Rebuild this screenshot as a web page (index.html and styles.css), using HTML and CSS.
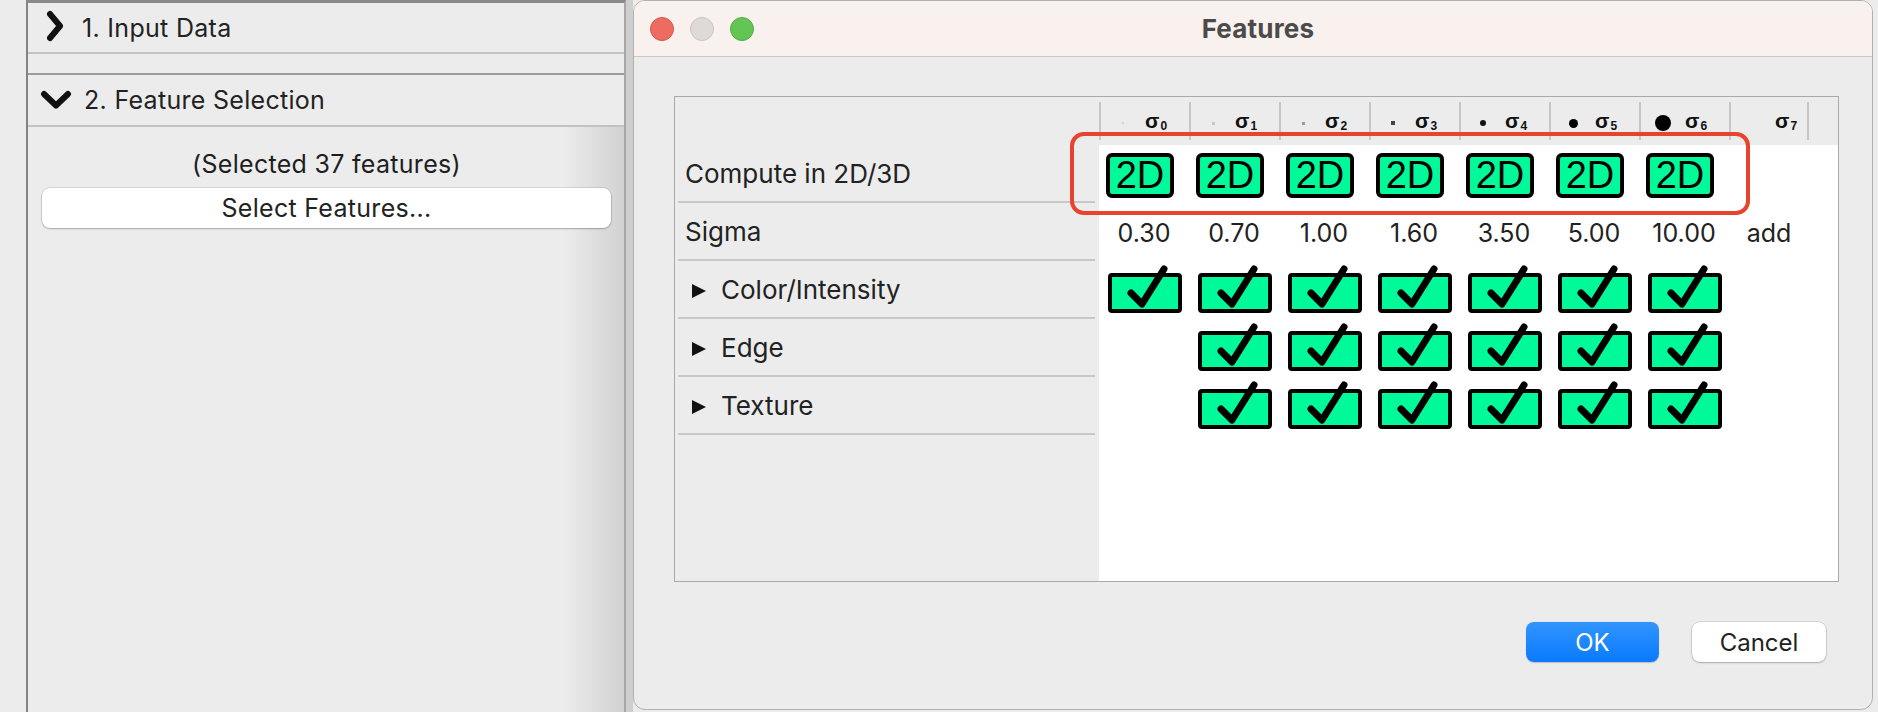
FILE: index.html
```html
<!DOCTYPE html>
<html>
<head>
<meta charset="utf-8">
<title>Features</title>
<link rel="stylesheet" href="styles.css">
</head>
<body>
<svg class="defs" width="0" height="0" aria-hidden="true">
  <defs>
    <symbol id="chk" viewBox="0 -10 74 50" overflow="visible">
      <rect x="2" y="2" width="70" height="36" rx="2" fill="#00fa9a" stroke="#000" stroke-width="4"/>
      <path d="M23 20 L34 31 L56 -4" fill="none" stroke="#000" stroke-width="7" stroke-linecap="round" stroke-linejoin="round"/>
    </symbol>
  </defs>
</svg>
<div class="screen">
  <div class="gutter"></div>
  <div class="panel">
    <div class="acc-head first">
      <svg class="chev-r" width="18" height="32" viewBox="0 0 18 32"><path d="M4 4 L14 16 L4 28" fill="none" stroke="#111" stroke-width="6" stroke-linecap="round" stroke-linejoin="round"/></svg>
      <span>1. Input Data</span>
    </div>
    <div class="acc-gap"></div>
    <div class="acc-head second">
      <svg class="chev-d" width="32" height="20" viewBox="0 0 32 20"><path d="M4 4 L16 15.5 L28 4" fill="none" stroke="#111" stroke-width="6" stroke-linecap="round" stroke-linejoin="round"/></svg>
      <span>2. Feature Selection</span>
    </div>
    <div class="acc-body">
      <div class="selected">(Selected 37 features)</div>
      <div class="select-btn">Select Features...</div>
    </div>
  </div>
  <div class="strip"></div>
  <div class="dialog">
    <div class="titlebar">
      <div class="lights">
        <span class="light red"></span>
        <span class="light gray"></span>
        <span class="light green"></span>
      </div>
      <div class="title">Features</div>
      <div></div>
    </div>
    <div class="dialog-body">
      <div class="table">
        <div class="labels">
          <div class="labels-head"></div>
          <div class="label-row">Compute in 2D/3D</div>
          <div class="label-row">Sigma</div>
          <div class="label-row"><span class="tri"></span>Color/Intensity</div>
          <div class="label-row"><span class="tri"></span>Edge</div>
          <div class="label-row"><span class="tri"></span>Texture</div>
        </div>
        <div class="grid">
          <div class="grid-head">
            <div class="colh"><div class="colh-in"><span class="dot-slot"><span class="dot d0"></span></span><span class="sig">σ<sub>0</sub></span></div></div>
            <div class="colh"><div class="colh-in"><span class="dot-slot"><span class="dot d1"></span></span><span class="sig">σ<sub>1</sub></span></div></div>
            <div class="colh"><div class="colh-in"><span class="dot-slot"><span class="dot d2"></span></span><span class="sig">σ<sub>2</sub></span></div></div>
            <div class="colh"><div class="colh-in"><span class="dot-slot"><span class="dot d3"></span></span><span class="sig">σ<sub>3</sub></span></div></div>
            <div class="colh"><div class="colh-in"><span class="dot-slot"><span class="dot d4"></span></span><span class="sig">σ<sub>4</sub></span></div></div>
            <div class="colh"><div class="colh-in"><span class="dot-slot"><span class="dot d5"></span></span><span class="sig">σ<sub>5</sub></span></div></div>
            <div class="colh"><div class="colh-in"><span class="dot-slot"><span class="dot d6"></span></span><span class="sig">σ<sub>6</sub></span></div></div>
            <div class="colh last"><div class="colh-in"><span class="dot-slot"></span><span class="sig">σ<sub>7</sub></span></div></div>
          </div>
          <div class="grid-body">
            <div class="grid-row">
              <div class="cell"><span class="b2d">2D</span></div>
              <div class="cell"><span class="b2d">2D</span></div>
              <div class="cell"><span class="b2d">2D</span></div>
              <div class="cell"><span class="b2d">2D</span></div>
              <div class="cell"><span class="b2d">2D</span></div>
              <div class="cell"><span class="b2d">2D</span></div>
              <div class="cell"><span class="b2d">2D</span></div>
            </div>
            <div class="grid-row values">
              <div class="cell">0.30</div>
              <div class="cell">0.70</div>
              <div class="cell">1.00</div>
              <div class="cell">1.60</div>
              <div class="cell">3.50</div>
              <div class="cell">5.00</div>
              <div class="cell">10.00</div>
              <div class="cell last">add</div>
            </div>
            <div class="grid-row">
              <div class="cell"><svg class="chk"><use href="#chk"/></svg></div>
              <div class="cell"><svg class="chk"><use href="#chk"/></svg></div>
              <div class="cell"><svg class="chk"><use href="#chk"/></svg></div>
              <div class="cell"><svg class="chk"><use href="#chk"/></svg></div>
              <div class="cell"><svg class="chk"><use href="#chk"/></svg></div>
              <div class="cell"><svg class="chk"><use href="#chk"/></svg></div>
              <div class="cell"><svg class="chk"><use href="#chk"/></svg></div>
            </div>
            <div class="grid-row">
              <div class="cell"></div>
              <div class="cell"><svg class="chk"><use href="#chk"/></svg></div>
              <div class="cell"><svg class="chk"><use href="#chk"/></svg></div>
              <div class="cell"><svg class="chk"><use href="#chk"/></svg></div>
              <div class="cell"><svg class="chk"><use href="#chk"/></svg></div>
              <div class="cell"><svg class="chk"><use href="#chk"/></svg></div>
              <div class="cell"><svg class="chk"><use href="#chk"/></svg></div>
            </div>
            <div class="grid-row">
              <div class="cell"></div>
              <div class="cell"><svg class="chk"><use href="#chk"/></svg></div>
              <div class="cell"><svg class="chk"><use href="#chk"/></svg></div>
              <div class="cell"><svg class="chk"><use href="#chk"/></svg></div>
              <div class="cell"><svg class="chk"><use href="#chk"/></svg></div>
              <div class="cell"><svg class="chk"><use href="#chk"/></svg></div>
              <div class="cell"><svg class="chk"><use href="#chk"/></svg></div>
            </div>
          </div>
        </div>
        <div class="highlight"></div>
      </div>
      <div class="buttons">
        <div class="btn ok">OK</div>
        <div class="btn cancel">Cancel</div>
      </div>
    </div>
  </div>
</div>
</body>
</html>
```

FILE: styles.css
```css
* { box-sizing: border-box; }
html, body { margin: 0; padding: 0; }
body {
  width: 1878px;
  height: 712px;
  overflow: hidden;
  background: #ececec;
  font-family: Inter, "Liberation Sans", sans-serif;
  color: #222;
}
.defs { position: absolute; width: 0; height: 0; }
.screen { display: flex; height: 712px; }
.gutter { width: 26px; flex: none; background: #ececec; }

/* left panel */
.panel {
  width: 600px;
  flex: none;
  display: flex;
  flex-direction: column;
  border-left: 2px solid #838383;
  border-right: 2px solid #a6a6a6;
  border-top: 3px solid #8a8a8a;
  background: #ececec;
}
.acc-head {
  display: flex;
  align-items: center;
  font-size: 25px;
  letter-spacing: 0.3px;
  color: #222;
  background: #ececec;
  border-bottom: 2px solid #c2c2c2;
}
.acc-head.first { height: 51px; padding-left: 18px; }
.acc-head.first span { margin-left: 18px; }
.acc-head.second { height: 52px; padding-left: 12px; }
.acc-head.second span { margin-left: 12px; }
.chev-r { margin-top: -3px; }
.acc-gap { height: 21px; border-bottom: 2px solid #9c9c9c; }
.acc-body {
  flex: 1;
  display: flex;
  flex-direction: column;
  align-items: stretch;
  padding: 22px 13px 0 14px;
  background: linear-gradient(to right, #ececec 0, #ececec 535px, #d2d2d2 596px);
}
.selected {
  text-align: center;
  font-size: 25px;
  letter-spacing: 0.3px;
  line-height: 30px;
  color: #1e1e1e;
}
.select-btn {
  margin-top: 9px;
  height: 40px;
  border-radius: 8px;
  background: #fff;
  box-shadow: 0 0 0 0.5px rgba(0,0,0,0.18), 0 1px 2px rgba(0,0,0,0.22);
  display: flex;
  align-items: center;
  justify-content: center;
  font-size: 25px;
  letter-spacing: 0.3px;
  color: #222;
}
.strip { width: 7px; flex: none; background: #cfcfcf; }

/* dialog */
.dialog {
  width: 1240px;
  height: 710px;
  flex: none;
  border: 1px solid #b0b0b0;
  border-radius: 12px;
  background: #ececec;
  overflow: hidden;
  display: flex;
  flex-direction: column;
}
.titlebar {
  height: 56px;
  flex: none;
  background: #f9f1ee;
  border-bottom: 1px solid #cdc8c6;
  display: grid;
  grid-template-columns: 1fr auto 1fr;
  align-items: center;
}
.lights { display: flex; gap: 16px; padding-left: 16px; }
.light {
  width: 24px;
  height: 24px;
  border-radius: 50%;
  display: block;
}
.light.red { background: #ee6b5f; border: 1px solid #d9564b; }
.light.gray { background: #dedad8; border: 1px solid #c9c4c2; }
.light.green { background: #62c554; border: 1px solid #53ad45; }
.title {
  font-size: 26px;
  font-weight: 700;
  letter-spacing: 0.2px;
  color: #4b4b4b;
  padding-left: 10px;
}
.dialog-body {
  flex: 1;
  padding: 39px 0 0 40px;
  display: flex;
  flex-direction: column;
}
.table {
  position: relative;
  width: 1165px;
  height: 486px;
  border: 1px solid #a9a9a9;
  display: flex;
}
.labels { width: 424px; flex: none; }
.labels-head { height: 48px; }
.label-row {
  height: 58px;
  margin: 0 4px 0 3px;
  padding-left: 7px;
  border-bottom: 2px solid #c8c8c8;
  display: flex;
  align-items: center;
  font-size: 26px;
  color: #222;
}
.tri {
  width: 0;
  height: 0;
  border-left: 14px solid #111;
  border-top: 7px solid transparent;
  border-bottom: 7px solid transparent;
  margin: 3px 15px 0 7px;
}
.grid { flex: 1; display: flex; flex-direction: column; }
.grid-head { height: 48px; flex: none; display: flex; }
.colh { width: 90px; flex: none; padding: 5px 0; }
.colh.last { width: 80px; }
.colh-in {
  height: 38px;
  border-left: 2px solid #c6c6c6;
  display: flex;
  align-items: center;
  padding-top: 4px;
}
.colh.last .colh-in { border-right: 2px solid #c6c6c6; }
.dot-slot {
  width: 44px;
  flex: none;
  display: flex;
  justify-content: center;
  align-items: center;
}
.dot { display: block; border-radius: 50%; }
.d0 { width: 2px; height: 2px; background: #d4d4d4; border-radius: 0; }
.d1 { width: 3px; height: 3px; background: #c6c6c6; border-radius: 0; }
.d2 { width: 3px; height: 3px; background: #9a9a9a; border-radius: 0; }
.d3 { width: 4px; height: 4px; background: #444; border-radius: 0; }
.d4 { width: 6px; height: 6px; background: #111; }
.d5 { width: 9px; height: 9px; background: #000; }
.d6 { width: 16px; height: 16px; background: #000; }
.sig {
  font-family: "Liberation Sans", Arial, sans-serif;
  font-weight: 700;
  font-size: 21px;
  line-height: 20px;
  color: #111;
}
.sig sub {
  font-size: 12px;
  vertical-align: -2px;
  margin-left: 1px;
}
.grid-body { flex: 1; background: #fff; }
.grid-row { height: 58px; display: flex; align-items: center; }
.cell {
  width: 90px;
  flex: none;
  display: flex;
  align-items: center;
}
.cell.last { width: 80px; }
.values .cell {
  justify-content: center;
  font-size: 25px;
  color: #222;
  padding-top: 2px;
}
.b2d {
  margin-left: 7px;
  width: 68px;
  height: 45px;
  border: 4px solid #000;
  border-radius: 6px;
  background: #00fa9a;
  font-family: "Liberation Sans", Arial, sans-serif;
  font-size: 38px;
  line-height: 36px;
  text-align: center;
  color: #000;
  margin-top: 2px;
}
.chk {
  width: 74px;
  height: 50px;
  margin-left: 9px;
  margin-top: -4px;
  overflow: visible;
}
.highlight {
  position: absolute;
  left: 395px;
  top: 35px;
  width: 680px;
  height: 83px;
  border: 4px solid #e8432d;
  border-radius: 14px;
}
.buttons {
  margin-top: 40px;
  display: flex;
  justify-content: flex-end;
  gap: 33px;
  padding-right: 46px;
}
.btn {
  height: 40px;
  border-radius: 8px;
  display: flex;
  align-items: center;
  justify-content: center;
  font-size: 24px;
}
.btn.ok {
  width: 133px;
  color: #fff;
  background: linear-gradient(#3195fd, #0a7aff);
  box-shadow: 0 0.5px 1px rgba(0,0,0,0.2);
}
.btn.cancel {
  width: 134px;
  color: #222;
  background: #fff;
  box-shadow: 0 0 0 0.5px rgba(0,0,0,0.18), 0 1px 2px rgba(0,0,0,0.22);
}
```
